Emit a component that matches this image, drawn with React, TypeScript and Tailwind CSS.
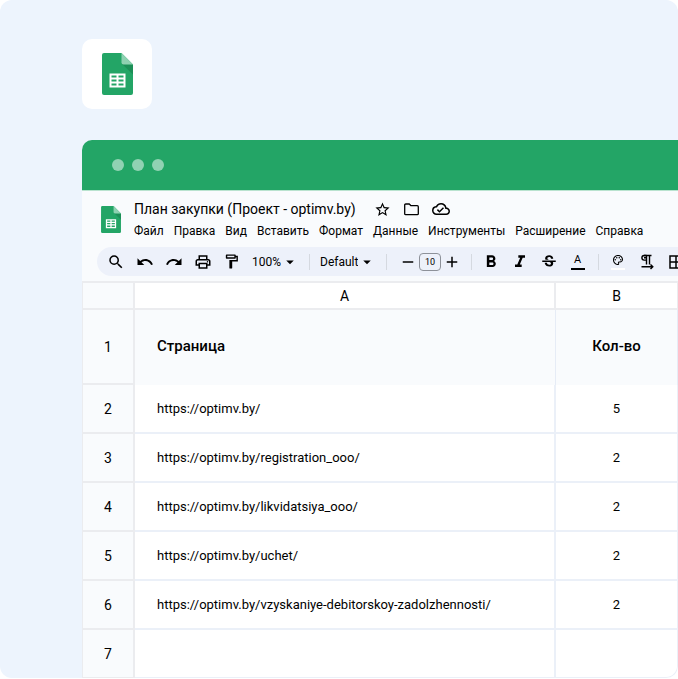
import { memo } from 'react';
import {
    MdAdd,
    MdArrowDropDown,
    MdBorderAll,
    MdFormatBold,
    MdFormatItalic,
    MdOutlineCloudDone,
    MdOutlineFormatPaint,
    MdOutlinePalette,
    MdOutlinePrint,
    MdRedo,
    MdRemove,
    MdSearch,
    MdStarBorder,
    MdStrikethroughS,
    MdUndo,
} from 'react-icons/md';

interface ToolButtonProps {
    label: string;
    children: React.ReactNode;
}

interface ToolSelectProps {
    label: string;
    options: string[];
    className: string;
}

const menuItems = [
    'Файл',
    'Правка',
    'Вид',
    'Вставить',
    'Формат',
    'Данные',
    'Инструменты',
    'Расширение',
    'Справка',
];

const rows = [
    { url: 'https://optimv.by/', count: '5' },
    { url: 'https://optimv.by/registration_ooo/', count: '2' },
    { url: 'https://optimv.by/likvidatsiya_ooo/', count: '2' },
    { url: 'https://optimv.by/uchet/', count: '2' },
    { url: 'https://optimv.by/vzyskaniye-debitorskoy-zadolzhennosti/', count: '2' },
];

const SheetsLogo = ({ className }: { className: string }) => (
    <svg className={className} viewBox="0 0 31 42" aria-hidden="true">
        <path fill="#23a566" d="M2 0h17.5L31 11.5V40a2 2 0 0 1-2 2H2a2 2 0 0 1-2-2V2a2 2 0 0 1 2-2z" />
        <path fill="#1c8f57" d="M20 11l11 10.5v-10z" />
        <path fill="#8ed1b1" d="M19.5 0L31 11.5h-9.5a2 2 0 0 1-2-2z" />
        <path
            fill="#fff"
            fillRule="evenodd"
            d="M7.5 20.5h16v14h-16zM9.5 22.5v2h5v-2zM16.5 22.5v2h5v-2zM9.5 26.5v2h5v-2zM16.5 26.5v2h5v-2zM9.5 30.5v2h5v-2zM16.5 30.5v2h5v-2z"
        />
    </svg>
);

const FolderIcon = () => (
    <svg className="size-[17px]" viewBox="0 0 17 17" fill="none" stroke="currentColor" strokeWidth="1.3" strokeLinejoin="round" aria-hidden="true">
        <path d="M1.7 4a1 1 0 0 1 1-1h3.6l1.7 1.7h6.3a1 1 0 0 1 1 1v7a1 1 0 0 1-1 1H2.7a1 1 0 0 1-1-1z" />
    </svg>
);

const TextDirectionIcon = () => (
    <svg className="size-4" viewBox="0 0 16 16" fill="none" stroke="currentColor" strokeWidth="1.4" aria-hidden="true">
        <path d="M5 1.5h7.5M7.5 1.5v9M10.5 1.5v9" />
        <path d="M7.5 1.5H5.2a2.2 2.2 0 0 0 0 4.6h2.3" />
        <path d="M5 3.8h2" />
        <path d="M2.5 12.8h11M11.5 10.5l2.3 2.3-2.3 2.3" />
    </svg>
);

const ToolButton = ({ label, children }: ToolButtonProps) => (
    <button type="button" aria-label={label} className="flex w-[29px] shrink-0 items-center justify-center">
        {children}
    </button>
);

const ToolSelect = ({ label, options, className }: ToolSelectProps) => (
    <label className="flex shrink-0 items-center">
        <select aria-label={label} className={`appearance-none bg-transparent text-xs outline-none ${className}`}>
            {options.map((option) => (
                <option key={option}>{option}</option>
            ))}
        </select>
        <MdArrowDropDown className="size-[18px] shrink-0" />
    </label>
);

const Separator = () => <span className="h-4 w-px shrink-0 bg-[#d5d9e0]" />;

const Toolbar = memo(() => (
    <div className="ml-[15px] flex h-[29px] items-center overflow-hidden rounded-l-full bg-[#edf1fa] pl-1">
        <ToolButton label="Поиск"><MdSearch className="size-[18px]" /></ToolButton>
        <ToolButton label="Отменить"><MdUndo className="size-[18px]" /></ToolButton>
        <ToolButton label="Повторить"><MdRedo className="size-[18px]" /></ToolButton>
        <ToolButton label="Печать"><MdOutlinePrint className="size-[18px]" /></ToolButton>
        <ToolButton label="Копировать форматирование"><MdOutlineFormatPaint className="size-[17px]" /></ToolButton>
        <div className="flex shrink-0 items-center gap-[10px] pl-1.5">
            <ToolSelect label="Масштаб" options={['100%', '75%', '50%']} className="w-[29px]" />
            <Separator />
            <ToolSelect label="Шрифт" options={['Default', 'Arial']} className="w-[38px]" />
            <Separator />
            <div className="flex items-center gap-0.5 pl-0.5">
                <button type="button" aria-label="Уменьшить размер"><MdRemove className="size-[18px]" /></button>
                <input
                    aria-label="Размер шрифта"
                    defaultValue="10"
                    className="h-[18px] w-[22px] rounded-sm border border-[#8d9199] text-center text-[9px] outline-none"
                />
                <button type="button" aria-label="Увеличить размер"><MdAdd className="size-[18px]" /></button>
            </div>
            <Separator />
        </div>
        <div className="flex shrink-0 items-center pl-1">
            <ToolButton label="Полужирный"><MdFormatBold className="size-5" /></ToolButton>
            <ToolButton label="Курсив"><MdFormatItalic className="size-5" /></ToolButton>
            <ToolButton label="Зачёркнутый"><MdStrikethroughS className="size-[18px]" /></ToolButton>
            <ToolButton label="Цвет текста">
                <span className="w-[14px] border-b-2 border-black pb-0.5 text-center text-[11px] leading-3">A</span>
            </ToolButton>
        </div>
        <div className="flex shrink-0 items-center gap-1 pl-1.5">
            <Separator />
            <div className="flex items-center">
                <ToolButton label="Цвет заливки">
                    <span className="flex w-[14px] justify-center border-b-2 border-white pb-0.5">
                        <MdOutlinePalette className="size-3" />
                    </span>
                </ToolButton>
                <ToolButton label="Направление текста"><TextDirectionIcon /></ToolButton>
                <ToolButton label="Границы"><MdBorderAll className="size-[18px]" /></ToolButton>
            </div>
        </div>
    </div>
));

Toolbar.displayName = 'Toolbar';

const rowHeadClass = 'border-r-2 border-b-2 border-[#ebecef] bg-[#f9fbfd] text-sm font-normal';
const cellClass = 'border-r-2 border-b-2 border-[#ebf0f8]';

const Sheet = () => (
    <table className="w-full table-fixed border-separate border-spacing-0 border-t-2 border-l border-[#ebecef] bg-white text-[13px]">
        <colgroup>
            <col className="w-[52px]" />
            <col />
            <col className="w-[122px]" />
        </colgroup>
        <thead>
            <tr className="h-[27px] text-sm">
                <td className={rowHeadClass} />
                <th scope="col" className="border-r-2 border-b-2 border-[#ebecef] font-normal">A</th>
                <th scope="col" className="border-r border-b-2 border-[#ebecef] font-normal">B</th>
            </tr>
        </thead>
        <tbody>
            <tr className="h-[75px] text-[15px]">
                <th scope="row" className={rowHeadClass}>1</th>
                <td className="border-r border-[#e6ecf6] bg-[#f9fbfd] pb-0.5 pl-[22px] font-medium">Страница</td>
                <td className="border-r border-[#e6ecf6] bg-[#f9fbfd] pb-0.5 text-center font-medium">Кол-во</td>
            </tr>
            {rows.map((row, index) => (
                <tr key={row.url} className="h-[49px]">
                    <th scope="row" className={rowHeadClass}>{index + 2}</th>
                    <td className={`${cellClass} pl-[22px]`}>{row.url}</td>
                    <td className="border-r border-b-2 border-[#ebf0f8] text-center">{row.count}</td>
                </tr>
            ))}
            <tr className="h-12">
                <th scope="row" className="border-r-2 border-b border-[#ebecef] bg-[#f9fbfd] text-sm font-normal">7</th>
                <td className="border-r-2 border-b border-[#ebf0f8]" />
                <td className="rounded-br-xl border-r border-b border-[#ebf0f8]" />
            </tr>
        </tbody>
    </table>
);

export default function App() {
    return (
        <div className="bg-white pb-px font-['Roboto','Liberation_Sans',sans-serif] text-black">
            <main className="overflow-hidden rounded-xl bg-[#edf4fd] pt-[39px] pl-[82px]">
                <div className="flex size-[70px] items-center justify-center rounded-[10px] bg-white">
                    <SheetsLogo className="h-[42px] w-[31px]" />
                </div>

                {/* Spreadsheet window */}
                <section className="mt-[31px] overflow-hidden rounded-tl-[10px] bg-[#f9fbfd]">
                    <div className="flex h-[51px] items-center gap-2 border-b border-[#b9e3cf] bg-[#23a566] pl-[30px]">
                        <span className="size-3 rounded-full bg-[#91d2b3]" />
                        <span className="size-3 rounded-full bg-[#91d2b3]" />
                        <span className="size-3 rounded-full bg-[#91d2b3]" />
                    </div>

                    <header className="flex h-14 items-center gap-[13px] pl-[19px]">
                        <SheetsLogo className="h-[27px] w-5 shrink-0" />
                        <div>
                            <div className="flex items-center gap-3 whitespace-nowrap">
                                <h1 className="pr-1.5 text-sm leading-6">План закупки (Проект - optimv.by)</h1>
                                <button type="button" aria-label="Добавить в избранное"><MdStarBorder className="size-[17px]" /></button>
                                <button type="button" aria-label="Переместить"><FolderIcon /></button>
                                <button type="button" aria-label="Статус документа"><MdOutlineCloudDone className="size-[18px]" /></button>
                            </div>
                            <nav className="flex gap-[10px] text-xs leading-5 whitespace-nowrap">
                                {menuItems.map((item) => (
                                    <a key={item} href="#">{item}</a>
                                ))}
                            </nav>
                        </div>
                    </header>

                    <Toolbar />
                    <div className="h-[5px]" />
                    <Sheet />
                </section>
            </main>
        </div>
    );
}
